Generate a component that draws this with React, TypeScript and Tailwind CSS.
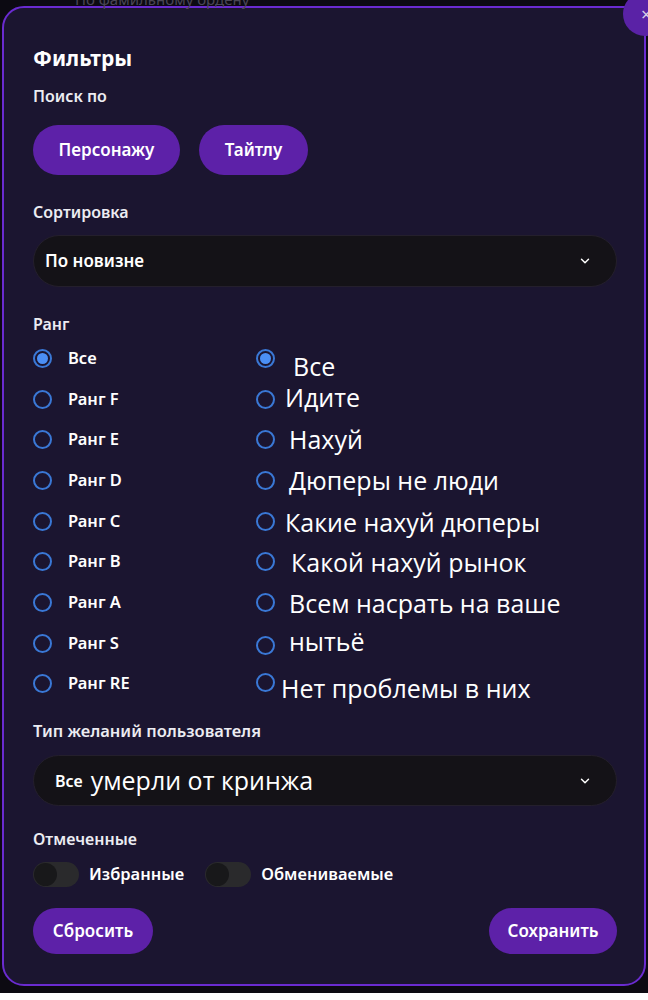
import React from "react";
import { ChevronDown } from "lucide-react";

const ui = { fontFamily: '"Noto Sans", "Open Sans", sans-serif' };
const meme = { fontFamily: '"Open Sans", "Noto Sans", sans-serif' };

const ranks = ["Все", "Ранг F", "Ранг E", "Ранг D", "Ранг C", "Ранг B", "Ранг A", "Ранг S", "Ранг RE"];

const right = [
  { t: "Все", r: "ml-[4px]", l: "ml-[18px] mt-[16px]" },
  { t: "Идите", r: "ml-[4px]", l: "ml-[10px] -mt-[4px]" },
  { t: "Нахуй", r: "ml-[4px]", l: "ml-[14px]" },
  { t: "Дюперы не люди", r: "ml-[4px]", l: "ml-[14px]" },
  { t: "Какие нахуй дюперы", r: "ml-[4px]", l: "ml-[10px] mt-[2px]" },
  { t: "Какой нахуй рынок", r: "ml-[4px]", l: "ml-[16px] mt-[2px]" },
  { t: "Всем насрать на ваше", r: "ml-[4px]", l: "ml-[14px] mt-[2px]" },
  { t: "нытьё", r: "ml-[4px] mt-[4px]", l: "ml-[14px] -mt-[4px]" },
  { t: "Нет проблемы в них", r: "ml-[4px] -mt-[2px]", l: "ml-[6px] mt-[10px]" },
];

function Radio({ on }: { on?: boolean }) {
  return (
    <span className="flex h-[19px] w-[19px] shrink-0 items-center justify-center rounded-full border-2 border-[#3a78d6]">
      {on && <span className="h-[11px] w-[11px] rounded-full bg-[#4b8ff5]" />}
    </span>
  );
}

function Toggle() {
  return (
    <span className="flex h-[25px] w-[46px] items-center rounded-full bg-[#2a2a2c] px-[1px]">
      <span className="h-[23px] w-[23px] rounded-full bg-[#18181a]" />
    </span>
  );
}

export default function App() {
  return (
    <div className="h-[1000px] w-[648px] bg-white" style={ui}>
      <div className="relative h-[993px] w-[648px] overflow-hidden bg-[#0c0a12] pt-[6px] pl-[2px]">
        <div className="absolute left-[75px] top-[-12px] text-[15px] text-[#4a4656]">По фамильному ордену</div>
        <div className="flex h-[980px] w-[644px] flex-col rounded-[22px] border-2 border-[#6a2bd0] bg-[#1b1530] pl-[29px] pr-[27px] pt-[38px] text-[#ececf2]">
          <div className="h-[24px] text-[21px] font-bold leading-[24px] text-white">Фильтры</div>
          <div className="mt-[16px] h-[20px] text-[16px] font-semibold leading-[20px]">Поиск по</div>
          <div className="mt-[19px] flex gap-[19px]">
            <button className="h-[50px] w-[147px] rounded-full bg-[#5d21a8] text-[17px] font-semibold text-white">Персонажу</button>
            <button className="h-[50px] w-[109px] rounded-full bg-[#5d21a8] text-[17px] font-semibold text-white">Тайтлу</button>
          </div>
          <div className="mt-[27px] h-[20px] text-[16px] font-semibold leading-[20px]">Сортировка</div>
          <div className="mt-[13px] flex h-[52px] w-[584px] items-center justify-between rounded-full border border-[#241f2c] bg-[#141217] pl-[11px] pr-[24px]">
            <span className="text-[17px] font-semibold text-white">По новизне</span>
            <ChevronDown size={14} strokeWidth={2.5} className="text-white" />
          </div>
          <div className="mt-[27px] h-[20px] text-[16px] font-semibold leading-[20px]">Ранг</div>
          <div className="mt-[4px] flex">
            <div className="flex w-[219px] flex-col">
              {ranks.map((r, i) => (
                <div key={r} className="flex h-[40.7px] items-center">
                  <Radio on={i === 0} />
                  <span className="ml-[16px] text-[16.5px] font-semibold text-white">{r}</span>
                </div>
              ))}
            </div>
            <div className="flex flex-col" style={meme}>
              {right.map((r, i) => (
                <div key={r.t} className="relative flex h-[40.7px] items-center">
                  <span className={r.r}>
                    <Radio on={i === 0} />
                  </span>
                  <span className={`${r.l} whitespace-nowrap text-[25px] leading-none text-white`}>{r.t}</span>
                </div>
              ))}
            </div>
          </div>
          <div className="mt-[17px] h-[20px] text-[16.5px] font-semibold leading-[20px]">Тип желаний пользователя</div>
          <div className="mt-[14px] flex h-[51px] w-[584px] items-center justify-between rounded-full border border-[#241f2c] bg-[#141217] pl-[21px] pr-[24px]">
            <span className="flex items-center">
              <span className="text-[16px] font-semibold text-white">Все</span>
              <span className="ml-[8px] text-[25px] text-white" style={meme}>умерли от кринжа</span>
            </span>
            <ChevronDown size={14} strokeWidth={2.5} className="text-white" />
          </div>
          <div className="mt-[23px] h-[20px] text-[16px] font-semibold leading-[20px]">Отмеченные</div>
          <div className="mt-[13px] flex items-center">
            <Toggle />
            <span className="ml-[10px] text-[16.5px] font-semibold text-white">Избранные</span>
            <span className="ml-[21px]"><Toggle /></span>
            <span className="ml-[10px] text-[16.5px] font-semibold text-white">Обмениваемые</span>
          </div>
          <div className="mt-[21px] flex justify-between">
            <button className="h-[46px] w-[120px] rounded-full bg-[#5d21a8] text-[17px] font-semibold text-white">Сбросить</button>
            <button className="h-[46px] w-[128px] rounded-full bg-[#5d21a8] text-[17px] font-semibold text-white">Сохранить</button>
          </div>
        </div>
        <div className="absolute left-[623px] top-[-8px] flex h-[44px] w-[44px] items-center justify-start rounded-full bg-[#5a22a6] pl-[18px] text-[18px] text-[#d8d0e8]">×</div>
      </div>
    </div>
  );
}
